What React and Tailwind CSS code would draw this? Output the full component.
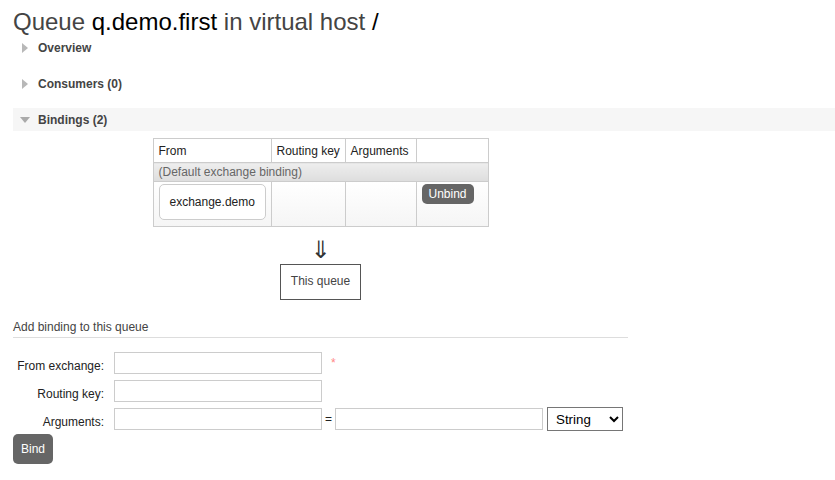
import React from "react";

function RightTriangle() {
  return (
    <svg width="6" height="10" viewBox="0 0 6 10" className="absolute left-[9px] top-[7px]">
      <polygon points="0,0 6,5 0,10" fill="#b8b8b8" />
    </svg>
  );
}

function DownTriangle() {
  return (
    <svg width="10" height="6" viewBox="0 0 10 6" className="absolute left-[7px] top-[9px]">
      <polygon points="0,0 10,0 5,6" fill="#aaaaaa" />
    </svg>
  );
}

function SectionHeader({ title, open = false }) {
  return (
    <div
      className={
        "relative flex h-[23px] items-center pl-[25px] pt-[2px] " + (open ? "bg-[#f6f6f6]" : "")
      }
    >
      {open ? <DownTriangle /> : <RightTriangle />}
      <span className="font-bold leading-[13px] text-[#444]">{title}</span>
    </div>
  );
}

function FormRow({ label, children }) {
  return (
    <div className="flex h-[28px] items-center">
      <label className="w-[91px] pt-[5px] text-right leading-[14px] text-[#222]">{label}</label>
      <div className="ml-[10px] flex items-center">{children}</div>
    </div>
  );
}

function TextInput() {
  return (
    <input
      type="text"
      className="h-[22px] w-[208px] border border-[#cccccc] bg-white px-[2px] text-[12px]"
    />
  );
}

export default function App() {
  return (
    <div className="min-h-screen bg-white pl-[13px] font-['Liberation_Sans',Arial,sans-serif] text-[12px] text-[#444]">
      <h1 className="pt-[8px] text-[24px] font-normal leading-[28px] text-[#444]">
        Queue <span className="text-black">q.demo.first</span> in virtual host{" "}
        <span className="text-black">/</span>
      </h1>

      <div className="mb-[13px]">
        <SectionHeader title="Overview" />
      </div>
      <div className="mb-[13px]">
        <SectionHeader title="Consumers (0)" />
      </div>
      <SectionHeader title="Bindings (2)" open />

      <div className="w-[615px]">
        {/* bindings table */}
        <div className="mt-[7px] flex justify-center">
          <table className="w-[335px] table-fixed border-collapse border border-[#cccccc] text-[12px]">
            <colgroup>
              <col className="w-[118px]" />
              <col className="w-[74px]" />
              <col className="w-[71px]" />
              <col className="w-[72px]" />
            </colgroup>
            <thead>
              <tr className="bg-white">
                <th className="border border-[#cccccc] px-[5px] pt-[6px] pb-[4px] text-left font-normal leading-[13px] text-[#222]">
                  From
                </th>
                <th className="whitespace-nowrap border border-[#cccccc] px-[5px] pt-[6px] pb-[4px] text-left font-normal leading-[13px] text-[#222]">
                  Routing key
                </th>
                <th className="border border-[#cccccc] px-[5px] pt-[6px] pb-[4px] text-left font-normal leading-[13px] text-[#222]">
                  Arguments
                </th>
                <th className="border border-[#cccccc] px-[5px] py-[5px]" />
              </tr>
            </thead>
            <tbody>
              <tr>
                <td
                  colSpan={4}
                  className="border border-[#cccccc] bg-linear-to-b from-[#eeeeee] to-[#dddddd] px-[5px] py-[2px] leading-[14px] text-[#666]"
                >
                  (Default exchange binding)
                </td>
              </tr>
              <tr className="bg-linear-to-b from-white to-[#f5f5f5]">
                <td className="border border-[#cccccc] px-[5px] pt-[2px] pb-[6px] align-top">
                  <div className="inline-block rounded-[5px] border border-[#cccccc] bg-white px-[10px] py-[10px] leading-[14px] text-[#222]">
                    exchange.demo
                  </div>
                </td>
                <td className="border border-[#cccccc]" />
                <td className="border border-[#cccccc]" />
                <td className="border border-[#cccccc] px-[5px] pt-[2px] pb-[6px] align-top">
                  <button className="rounded-[5px] bg-[#666666] px-[7px] py-[3px] leading-[14px] text-white">
                    Unbind
                  </button>
                </td>
              </tr>
            </tbody>
          </table>
        </div>

        {/* destination */}
        <div className="flex flex-col items-center">
          <div className="mt-[9px] font-['DejaVu_Sans',sans-serif] text-[24px] leading-[28px] text-[#333]">
            ⇓
          </div>
          <div className="border border-[#555555] px-[10px] pt-[9px] pb-[11px] leading-[14px] text-[#444]">
            This queue
          </div>
        </div>

        {/* add binding form */}
        <h3 className="mt-[20px] border-b border-[#dddddd] pb-[3px] text-[12px] font-normal leading-[14px] text-[#444]">
          Add binding to this queue
        </h3>

        <div className="mt-[11px]">
          <FormRow label="From exchange:">
            <TextInput />
            <span className="ml-[9px] leading-[14px] text-[#ff8888]">*</span>
          </FormRow>
          <FormRow label="Routing key:">
            <TextInput />
          </FormRow>
          <FormRow label="Arguments:">
            <TextInput />
            <span className="mx-[3px] leading-[14px] text-[#222]">=</span>
            <TextInput />
            <select className="ml-[4px] h-[24px] w-[76px] border border-[#767676] bg-white pl-[4px] text-[13.33px] text-black">
              <option>String</option>
              <option>Number</option>
              <option>Boolean</option>
              <option>List</option>
            </select>
          </FormRow>
        </div>

        <button className="mt-[1px] rounded-[5px] bg-[#666666] px-[8px] py-[8px] leading-[14px] text-white">
          Bind
        </button>
      </div>
    </div>
  );
}
